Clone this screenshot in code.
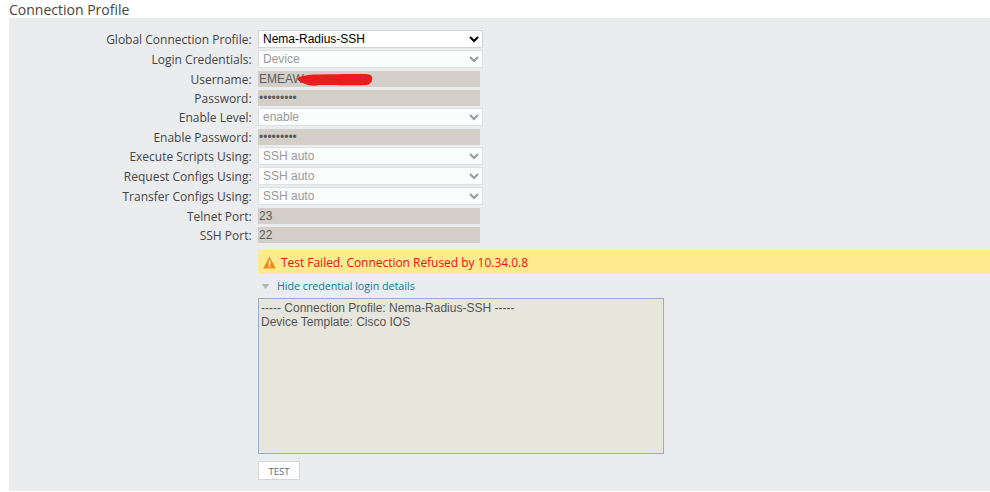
<div class="page">
  <h1 class="title">Connection Profile</h1>
  <section class="panel">
    <div class="form">
      <div class="row"><label class="lbl" for="a">Global Connection Profile:</label><select id="a" class="sel active"><option>Nema-Radius-SSH</option></select></div>
      <div class="row"><label class="lbl" for="b">Login Credentials:</label><select id="b" class="sel" disabled><option>Device</option></select></div>
      <div class="row inp"><label class="lbl" for="c">Username:</label>
        <div class="wrap"><input id="c" class="txt" value="EMEAW" readonly />
          <svg class="scribble" width="78" height="14" viewBox="0 0 78 14"><path d="M1 6.5C6 3.5 12 2.5 22 2.5C40 2 58 1.8 70 2C75 2.2 76.5 4.5 76.2 7C76 10 74 12.8 70 13C56 13.6 36 12.6 24 13C20 13.8 16 14 12 13C8 11.5 3 10 1 6.5Z" fill="#ea1c1c"/></svg>
        </div>
      </div>
      <div class="row inp"><label class="lbl" for="d">Password:</label><input id="d" class="txt" type="password" value="aaaaaaaaa" readonly /></div>
      <div class="row"><label class="lbl" for="e">Enable Level:</label><select id="e" class="sel" disabled><option>enable</option></select></div>
      <div class="row inp"><label class="lbl" for="f">Enable Password:</label><input id="f" class="txt" type="password" value="aaaaaaaaa" readonly /></div>
      <div class="row"><label class="lbl" for="g">Execute Scripts Using:</label><select id="g" class="sel" disabled><option>SSH auto</option></select></div>
      <div class="row"><label class="lbl" for="h">Request Configs Using:</label><select id="h" class="sel" disabled><option>SSH auto</option></select></div>
      <div class="row"><label class="lbl" for="i">Transfer Configs Using:</label><select id="i" class="sel" disabled><option>SSH auto</option></select></div>
      <div class="row inp"><label class="lbl" for="j">Telnet Port:</label><input id="j" class="txt" value="23" readonly /></div>
      <div class="row inp"><label class="lbl" for="k">SSH Port:</label><input id="k" class="txt" value="22" readonly /></div>
    </div>

    <div class="result">
      <div class="banner">
        <svg class="warn" width="13" height="13" viewBox="0 0 13 13"><path d="M6.5 0.5L12.8 12.4H0.2Z" fill="#f08a1c"/><rect x="5.8" y="4.4" width="1.5" height="4.4" fill="#fff"/><rect x="5.8" y="9.6" width="1.5" height="1.5" fill="#fff"/></svg>
        <span class="msg">Test Failed. Connection Refused by 10.34.0.8</span>
      </div>
      <div class="toggle">
        <svg class="tri" width="9" height="5" viewBox="0 0 9 5"><path d="M0.5 0H8.5L4.5 5Z" fill="#b4b8bc"/></svg>
        <span>Hide credential login details</span>
      </div>
      <textarea class="log" readonly>----- Connection Profile: Nema-Radius-SSH -----
Device Template: Cisco IOS</textarea>
      <button class="test" type="button">TEST</button>
    </div>
  </section>
</div>

<style>
  :global(body) { margin: 0; background: #fff; }
  .page { width: 990px; height: 492px; overflow: hidden; }
  .title {
    margin: 0;
    height: 17px;
    padding: 1px 0 0 9px;
    font: 400 14px/17px "Open Sans", sans-serif;
    color: #444;
  }
  .panel {
    margin-left: 9px;
    height: 473px;
    background: #ebecee;
    padding-top: 12px;
    box-sizing: border-box;
  }
  .form { display: flex; flex-direction: column; gap: 2px; }
  .row { display: flex; align-items: center; height: 18px; }
  .row.inp { height: 16px; margin-top: 1px; }
  .lbl {
    width: 242.6px;
    margin-right: 6.4px;
    text-align: right;
    font: 400 12px/17px "Open Sans", sans-serif;
    color: #444;
    white-space: nowrap;
  }
  .sel {
    width: 225px;
    height: 18px;
    box-sizing: border-box;
    font: 12px "Liberation Sans", Arial, sans-serif;
    background-color: #fff;
    color: #000;
    border: 1px solid #d4d4d4;
    padding: 0;
    margin: 0;
    border-radius: 0;
  }
  .sel:disabled { color: #9a9a9a; background-color: #fbfcfc; border-color: #dfe0e1; opacity: 1; }
  .wrap { position: relative; width: 222px; height: 16px; }
  .txt {
    display: block;
    width: 222px;
    height: 16px;
    box-sizing: border-box;
    border: 0;
    margin: 0;
    padding: 0 1px;
    background: #d3cfc8;
    color: #5c5c5c;
    font: 12px "Liberation Sans", Arial, sans-serif;
    outline: none;
  }
  .scribble { position: absolute; left: 38px; top: 1px; }
  .result {
    margin-left: 249px;
    margin-top: 7px;
    display: flex;
    flex-direction: column;
    align-items: flex-start;
  }
  .banner {
    align-self: stretch;
    height: 24px;
    background: #ffeb8f;
    display: flex;
    align-items: center;
    padding-left: 5px;
    gap: 5px;
    font: 400 11.95px/20px "Open Sans", sans-serif;
    color: #f01010;
  }
  .msg { padding-top: 2px; }
  .warn { flex: none; }
  .toggle {
    display: flex;
    align-items: center;
    height: 24px;
    padding-left: 3px;
    font: 400 10.67px/24px "Open Sans", sans-serif;
    color: #0f7aa6;
  }
  .tri { margin-right: 7px; }
  .log {
    display: block;
    width: 406px;
    height: 156px;
    box-sizing: border-box;
    margin: 0;
    padding: 2px 2px 1px;
    border: 1px solid #94aec8;
    background: #e6e6dd;
    color: #555;
    font: 12px/14px "Liberation Sans", Arial, sans-serif;
    resize: none;
    outline: none;
  }
  .test {
    margin-top: 7px;
    width: 42px;
    height: 19px;
    box-sizing: border-box;
    padding: 2px 0 0;
    background: #fff;
    border: 1px solid #d5d5d5;
    border-radius: 0;
    color: #44708a;
    font: 400 9.5px/15px "Open Sans", sans-serif;
  }
</style>
